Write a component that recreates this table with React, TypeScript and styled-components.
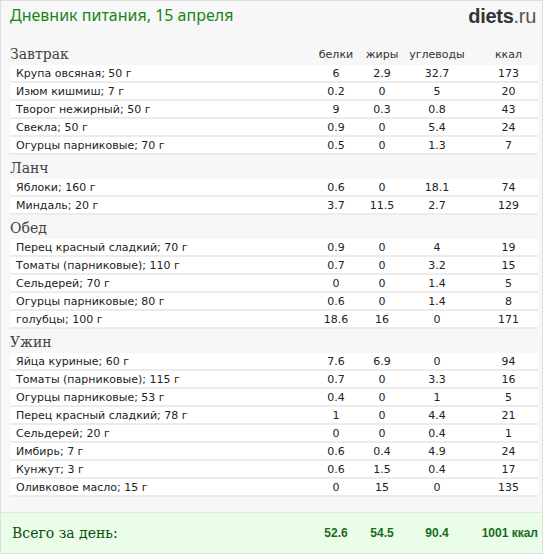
import React from 'react';
import styled, { createGlobalStyle } from 'styled-components';

interface Food {
  name: string;
  protein: string;
  fat: string;
  carbs: string;
  kcal: string;
}

interface Meal {
  title: string;
  foods: Food[];
}

const f = (name: string, protein: string, fat: string, carbs: string, kcal: string): Food => ({
  name,
  protein,
  fat,
  carbs,
  kcal,
});

const meals: Meal[] = [
  {
    title: 'Завтрак',
    foods: [
      f('Крупа овсяная; 50 г', '6', '2.9', '32.7', '173'),
      f('Изюм кишмиш; 7 г', '0.2', '0', '5', '20'),
      f('Творог нежирный; 50 г', '9', '0.3', '0.8', '43'),
      f('Свекла; 50 г', '0.9', '0', '5.4', '24'),
      f('Огурцы парниковые; 70 г', '0.5', '0', '1.3', '7'),
    ],
  },
  {
    title: 'Ланч',
    foods: [f('Яблоки; 160 г', '0.6', '0', '18.1', '74'), f('Миндаль; 20 г', '3.7', '11.5', '2.7', '129')],
  },
  {
    title: 'Обед',
    foods: [
      f('Перец красный сладкий; 70 г', '0.9', '0', '4', '19'),
      f('Томаты (парниковые); 110 г', '0.7', '0', '3.2', '15'),
      f('Сельдерей; 70 г', '0', '0', '1.4', '5'),
      f('Огурцы парниковые; 80 г', '0.6', '0', '1.4', '8'),
      f('голубцы; 100 г', '18.6', '16', '0', '171'),
    ],
  },
  {
    title: 'Ужин',
    foods: [
      f('Яйца куриные; 60 г', '7.6', '6.9', '0', '94'),
      f('Томаты (парниковые); 115 г', '0.7', '0', '3.3', '16'),
      f('Огурцы парниковые; 53 г', '0.4', '0', '1', '5'),
      f('Перец красный сладкий; 78 г', '1', '0', '4.4', '21'),
      f('Сельдерей; 20 г', '0', '0', '0.4', '1'),
      f('Имбирь; 7 г', '0.6', '0.4', '4.9', '24'),
      f('Кунжут; 3 г', '0.6', '1.5', '0.4', '17'),
      f('Оливковое масло; 15 г', '0', '15', '0', '135'),
    ],
  },
];

const GlobalStyle = createGlobalStyle`
  body {
    margin: 0;
    background: #fff;
  }
`;

const Frame = styled.div`
  width: 541px;
  height: 552px;
  border: 1px solid #dedede;
  background: #f7f7f7;
  display: flex;
  flex-direction: column;
  font-family: 'DejaVu Sans', Verdana, sans-serif;
`;

const TopBar = styled.div`
  height: 40px;
  display: flex;
  align-items: flex-start;
  justify-content: space-between;
  padding: 3px 6px 0 9px;
  box-sizing: border-box;
`;

const Title = styled.h1`
  margin: 0;
  font-family: 'Noto Sans', 'DejaVu Sans', sans-serif;
  font-size: 16px;
  font-weight: normal;
  color: #1a841a;
`;

const Logo = styled.div`
  font-family: 'Liberation Sans', Arial, sans-serif;
  font-size: 20px;
  color: #333;
  font-weight: bold;
  letter-spacing: -0.3px;
  margin-top: 1px;

  span {
    font-weight: normal;
    color: #555;
  }
`;

const Body = styled.div`
  flex: 1;
  padding: 0 4px 0 9px;
`;

const grid = `
  display: grid;
  grid-template-columns: 1fr 50px 42px 68px 67px;
  align-items: center;
`;

const SectionHead = styled.div`
  ${grid};
  height: 24px;
  align-items: end;
  padding-bottom: 3px;
  box-sizing: border-box;
`;

const SectionName = styled.div`
  font-family: 'DejaVu Serif', Georgia, serif;
  font-size: 14px;
  color: #444;
`;

const Label = styled.div<{ $last?: boolean }>`
  font-size: 11px;
  color: #333;
  text-align: center;
  padding-left: ${(p) => (p.$last ? '8px' : '0')};
  padding-bottom: 1px;
`;

const Row = styled.div`
  ${grid};
  height: 18px;
  background: #fff;
  border-bottom: 2px solid #ececec;
  box-sizing: border-box;
  font-size: 11px;
  color: #222;
`;

const Name = styled.div`
  padding-left: 6px;
`;

const Cell = styled.div<{ $last?: boolean }>`
  text-align: center;
  padding-left: ${(p) => (p.$last ? '8px' : '0')};
`;

const Totals = styled.div`
  ${grid};
  height: 41px;
  background: #e9fde9;
  border-top: 1px solid #dde9dd;
  box-sizing: border-box;
  padding: 0 4px 0 9px;
`;

const TotalsLabel = styled.div`
  font-family: 'DejaVu Serif', Georgia, serif;
  font-size: 14px;
  color: #0d4f0d;
  padding-left: 2px;
`;

const TotalsCell = styled.div<{ $last?: boolean }>`
  font-family: 'Liberation Sans', Arial, sans-serif;
  font-weight: bold;
  font-size: 12px;
  color: #1b6b1b;
  text-align: ${(p) => (p.$last ? 'right' : 'center')};
`;

const App: React.FC = () => {
  return (
    <>
      <GlobalStyle />
      <Frame>
        <TopBar>
          <Title>Дневник питания, 15 апреля</Title>
          <Logo>
            diets<span>.ru</span>
          </Logo>
        </TopBar>
        <Body>
          {meals.map((meal, i) => (
            <div key={meal.title}>
              <SectionHead>
                <SectionName>{meal.title}</SectionName>
                {i === 0 && (
                  <>
                    <Label>белки</Label>
                    <Label>жиры</Label>
                    <Label>углеводы</Label>
                    <Label $last>ккал</Label>
                  </>
                )}
              </SectionHead>
              {meal.foods.map((food) => (
                <Row key={food.name}>
                  <Name>{food.name}</Name>
                  <Cell>{food.protein}</Cell>
                  <Cell>{food.fat}</Cell>
                  <Cell>{food.carbs}</Cell>
                  <Cell $last>{food.kcal}</Cell>
                </Row>
              ))}
            </div>
          ))}
        </Body>
        <Totals>
          <TotalsLabel>Всего за день:</TotalsLabel>
          <TotalsCell>52.6</TotalsCell>
          <TotalsCell>54.5</TotalsCell>
          <TotalsCell>90.4</TotalsCell>
          <TotalsCell $last>1001 ккал</TotalsCell>
        </Totals>
      </Frame>
    </>
  );
};

export default App;
